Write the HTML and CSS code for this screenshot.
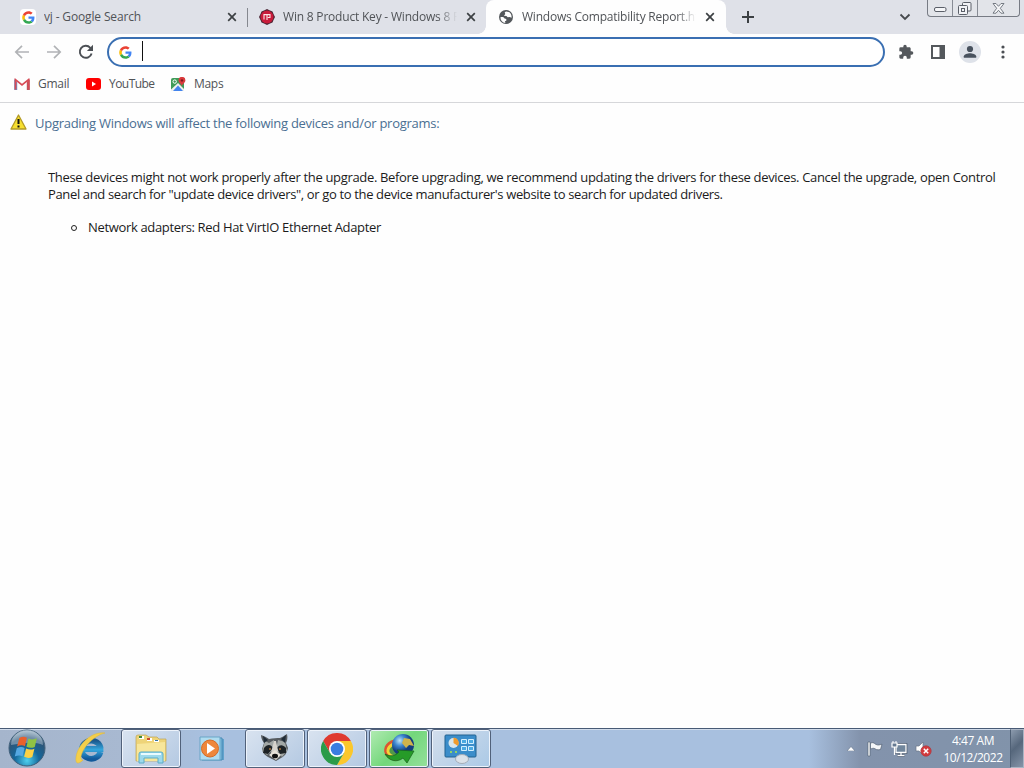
FILE: index.html
```html
<!DOCTYPE html>
<html lang="en">
<head>
<meta charset="utf-8">
<title>Windows Compatibility Report</title>
<link rel="stylesheet" href="styles.css">
</head>
<body>
<svg class="defs" width="0" height="0">
  <symbol id="google" viewBox="0 0 48 48">
    <path fill="#4285f4" d="M46 24.5c0-1.6-.1-3.100-.4-4.500H24v9h12.400c-.6 3-2.200 5.300-4.600 7l7.300 5.800C43.400 37.800 46 31.800 46 24.500z"/>
    <path fill="#34a853" d="M24 47c6.200 0 11.300-2 15.100-5.500L31.800 36c-2 1.400-4.700 2.200-7.800 2.200-6 0-11-4-12.800-9.400l-7.600 5.900C7.300 42 15 47 24 47z"/>
    <path fill="#fbbc05" d="M11.200 28.800a14 14 0 0 1 0-9.600l-7.600-5.900a23 23 0 0 0 0 21.400z"/>
    <path fill="#ea4335" d="M24 9.800c3.400 0 6.400 1.200 8.800 3.500l6.500-6.500C35.300 3.100 30.200 1 24 1 15 1 7.300 6 3.600 13.300l7.600 5.900C13 13.800 18 9.800 24 9.800z"/>
  </symbol>
  <symbol id="close" viewBox="0 0 10 10"><path d="M1.200 1.200l7.600 7.600M8.800 1.200L1.200 8.800" stroke="#3c4043" stroke-width="1.700"/></symbol>
</svg>

<header class="tabs">
  <div class="tab first">
    <span class="fav white"><svg width="13" height="13"><use href="#google"/></svg></span>
    <span class="title">vj - Google Search</span>
    <svg class="x" width="10" height="10"><use href="#close"/></svg>
  </div>
  <div class="tab second">
    <svg class="fav" viewBox="0 0 16 16"><path d="M8 0l3 1.500 2.500 1L14.500 5 16 8l-1.500 3-1 2.500-2.500 1L8 16l-3-1.500-2.500-1L1.500 11 0 8l1.500-3 1-2.500L5 1.500z" fill="#4b2534"/><circle cx="8" cy="8" r="6.500" fill="#c91c3b"/><path d="M5 10.500V5.600h6v2.900H8.800M8 5.600v5.400" fill="none" stroke="#fbe5e8" stroke-width="1.100"/></svg>
    <span class="title t2">Win 8 Product Key - Windows 8 Pro</span>
    <svg class="x" width="10" height="10"><use href="#close"/></svg>
  </div>
  <div class="tab active">
    <svg class="fav" viewBox="0 0 16 16"><circle cx="8" cy="8" r="7" fill="#54585c"/><path d="M2.500 8.200c1.800-.4 3.400 0 4 1.300l1.800.5v1.700l-1.400.6.500 1.600C4.400 13.700 2.200 11.500 2.500 8.200zM8.200 2.600c-1 .2-1.700.8-1.300 1.500l.4 1L5.900 6.700l2.500.3 1.300 1.300 2.100-.3 1.700.7c.6-3-1.500-6-4.300-6z" fill="#fff"/></svg>
    <span class="title t3">Windows Compatibility Report.html</span>
    <svg class="x" width="10" height="10"><use href="#close"/></svg>
  </div>
  <svg class="plus" width="12" height="12" viewBox="0 0 12 12"><path d="M6 0v12M0 6h12" stroke="#3c4043" stroke-width="2"/></svg>
  <svg class="chev" width="12" height="8" viewBox="0 0 12 8"><path d="M1.500 1.500L6 6l4.500-4.500" fill="none" stroke="#46494d" stroke-width="1.800"/></svg>
  <div class="winctl">
    <span class="wmin"><svg width="13" height="6" viewBox="0 0 13 6"><rect x=".5" y=".5" width="11.500" height="4" rx="1.500" fill="#f5f6f8" stroke="#5a5f68"/></svg></span>
    <span class="wmax"><svg width="14" height="13" viewBox="0 0 14 13"><g fill="#f1f2f5" stroke="#5a5f68"><rect x="4.500" y=".5" width="8.500" height="8.500" rx="1"/><rect x=".5" y="3.500" width="9" height="9" rx="1"/><rect x="3.500" y="6.500" width="3" height="3"/></g></svg></span>
    <span class="wcls"><svg width="13" height="11" viewBox="0 0 13 11"><path d="M1 .5h3l2.500 2.800L9 .5h3L8.300 5.300l3.700 4.900H9L6.500 7.300 4 10.200H1l3.700-4.900z" fill="#f5f6f8" stroke="#6a6f78" stroke-width=".9"/></svg></span>
  </div>
</header>

<nav class="toolbar">
  <svg class="arrow" width="16" height="14" viewBox="0 0 16 14"><path d="M15 7H2M8 .8L1.800 7 8 13.200" fill="none" stroke="#b1b3b6" stroke-width="1.700"/></svg>
  <svg class="arrow" width="16" height="14" viewBox="0 0 16 14"><path d="M1 7h13M8 .8L14.200 7 8 13.200" fill="none" stroke="#b1b3b6" stroke-width="1.700"/></svg>
  <svg class="reload" width="16" height="16" viewBox="0 0 16 16"><path d="M13.600 9.400A6 6 0 1 1 12.300 3.800L14 5.500" fill="none" stroke="#4b4f54" stroke-width="1.900"/><path d="M15 .8v6.100H8.900z" fill="#4b4f54"/></svg>
  <div class="omnibox"><svg width="13" height="13"><use href="#google"/></svg><i class="caret"></i></div>
  <svg class="puzzle" width="16" height="16" viewBox="0 0 24 24"><path fill="#54585c" d="M20.500 11H19V7c0-1.100-.9-2-2-2h-4V3.500a2.500 2.500 0 0 0-5 0V5H4a2 2 0 0 0-2 2v3.800h1.500a2.700 2.700 0 0 1 0 5.400H2V20c0 1.100.9 2 2 2h3.800v-1.500a2.700 2.700 0 0 1 5.400 0V22H17a2 2 0 0 0 2-2v-4h1.500a2.500 2.500 0 0 0 0-5z"/></svg>
  <svg class="panel" width="14" height="14" viewBox="0 0 14 14"><path fill="#54585c" fill-rule="evenodd" d="M0 0h14v14H0zM2 2v10h6.500V2z"/></svg>
  <svg class="avatar" width="22" height="22" viewBox="0 0 22 22"><circle cx="11" cy="11" r="11" fill="#dee2e9"/><circle cx="11" cy="8" r="3.100" fill="#48525e"/><path d="M4.800 16.800v-1.500c0-2 4-3.100 6.200-3.100s6.200 1.100 6.200 3.100v1.500z" fill="#48525e"/></svg>
  <svg class="dots" width="4" height="14" viewBox="0 0 4 14"><g fill="#4b4f54"><circle cx="2" cy="2" r="1.600"/><circle cx="2" cy="7" r="1.600"/><circle cx="2" cy="12" r="1.600"/></g></svg>
</nav>

<nav class="bookmarks">
  <a class="bm gmail"><svg width="16" height="12" viewBox="0 0 16 12"><path d="M.2 1v11h3V4z" fill="#7688bd"/><path d="M15.800 1v11h-3V4z" fill="#b7565f"/><path d="M1.500 11.500V1.700L8 7l6.500-5.300v9.800" fill="none" stroke="#d84a55" stroke-width="1.700"/></svg><span>Gmail</span></a>
  <a class="bm yt"><svg width="15" height="12" viewBox="0 0 15 12"><rect width="15" height="12" rx="3" fill="#f00"/><path d="M6 3.500v5L10 6z" fill="#fff"/></svg><span>YouTube</span></a>
  <a class="bm maps"><svg width="15" height="15" viewBox="0 0 15 15"><rect y="1" width="13" height="13" rx="2" fill="#3e9b57"/><path d="M0 12.500L7 6l6 6v2H0z" fill="#eef0ee"/><path d="M2 14L7 8.500 12 14z" fill="#4384ed"/><circle cx="3.700" cy="4.600" r="1.700" fill="none" stroke="#fff"/><path d="M10.800 9.500C10.600 7 7.500 6 7.500 3.300a3.400 3.400 0 0 1 6.900 0C14.400 6 11.100 7 10.800 9.500z" fill="#d93a3c"/><circle cx="11" cy="3.400" r="1.200" fill="#7c1b20"/></svg><span>Maps</span></a>
</nav>

<main class="report">
  <h1 class="heading">
    <svg width="17" height="16" viewBox="0 0 17 16"><path d="M8.500 1L16 15H1z" fill="#f7df2e" stroke="#b39a26" stroke-width="1.300" stroke-linejoin="round"/><path d="M8.500 5v5M8.500 11.500v2" stroke="#111" stroke-width="2"/></svg>
    <span>Upgrading Windows will affect the following devices and/or programs:</span>
  </h1>
  <p class="body"><span class="l1">These devices might not work properly after the upgrade. Before upgrading, we recommend updating the drivers for these devices. Cancel the upgrade, open Control</span><br><span class="l2">Panel and search for "update device drivers", or go to the device manufacturer's website to search for updated drivers.</span></p>
  <ul class="list"><li><i class="bullet"></i><span class="l3">Network adapters: Red Hat VirtIO Ethernet Adapter</span></li></ul>
</main>

<footer class="taskbar">
  <svg class="start" width="38" height="38" viewBox="0 0 38 38">
    <defs><radialGradient id="orb" cx=".5" cy=".85" r=".85"><stop offset="0" stop-color="#4fd0ee"/><stop offset=".4" stop-color="#14679b"/><stop offset=".75" stop-color="#2e5577"/><stop offset="1" stop-color="#a9bdcb"/></radialGradient></defs>
    <circle cx="19" cy="19" r="18" fill="url(#orb)" stroke="#405f79"/><path d="M3 16a16 15 0 0 1 32 0c-8-4-22-2-32 0z" fill="#d7e4ee" opacity=".4"/>
    <g transform="translate(-3.300 -3.300) scale(1.170)"><path d="M12.500 10.500c2.500-1.500 4.500-1.300 6.500-.2l-1.700 7.200c-2-1-4.200-1-6.700.3z" fill="#e8602c"/><path d="M20.300 11c2.500 1.200 4.800 1 7.200-.2l-1.800 7.300c-2.400 1-4.700 1-7.100-.2z" fill="#8fc244"/><path d="M10.300 19.200c2.500-1.300 4.700-1.300 6.700-.2l-1.700 7.200c-2-1-4.200-1-6.700.2z" fill="#55a8e2"/><path d="M18.300 19.500c2.400 1.200 4.700 1.100 7.100.1l-1.800 7.200c-2.400 1.200-4.700 1-7-.2z" fill="#fbd144"/></g>
  </svg>
  <svg class="ie" width="32" height="32" viewBox="0 0 32 32">
    <defs><linearGradient id="ieg" x2="0" y2="1"><stop stop-color="#1b588d"/><stop offset=".5" stop-color="#35a7dd"/><stop offset="1" stop-color="#12599b"/></linearGradient></defs>
    <path d="M26.500 20A9.500 9 0 1 1 26.500 15.500v1.500H11" fill="none" stroke="url(#ieg)" stroke-width="5.800"/><path d="M31 1C18-1 4 12 2 25c-1 8 3 7 7 3-4 1-2-8 4-15S26 2 31 1z" fill="#f4cf4b" stroke="#dfb63a" stroke-width=".5"/>
  </svg>
  <div class="task explorer"><svg width="34" height="32" viewBox="0 0 34 32"><path d="M2 28V4q0-2 2-2h8l3 2h8l2 2h7v22z" fill="#eed478" stroke="#bba35a" stroke-width=".7"/><path d="M5 3h5v3H5zM13 5h5v3h-5zM20 7h5v2h-5z" fill="#fff"/><path d="M5 3h3v2H5z" fill="#39863a"/><path d="M13 5h3v2h-3z" fill="#ca452e"/><path d="M21 7h3v1h-3z" fill="#3774a4"/><path d="M3 11l28-2v19H3z" fill="#f7e69b"/><path d="M5 30v-9q0-2 2-2h20q2 0 2 2v9h-5v-5H10v5z" fill="#9dd9ec" stroke="#5aadc8"/><path d="M7 21h20" stroke="#e9fbff" stroke-width="2"/></svg></div>
  <div class="task plain"><svg width="30" height="26" viewBox="0 0 30 26"><path d="M7 3h19v21H7z" fill="#62a3cc"/><path d="M4 2h20v22H4z" fill="#84c3e4" stroke="#4587b3"/><path d="M2 1h20v23H2z" fill="#afdcf0" stroke="#6ba5c6"/><circle cx="12" cy="12.500" r="8.500" fill="#ee873b" stroke="#d56b26"/><path d="M9 7v11l8-5.500z" fill="#fff"/></svg></div>
  <div class="task"><svg width="30" height="30" viewBox="0 0 30 30"><path d="M1 1c4 1 6 3 8 4 4-1 8-1 11-1 2-1 4-2 7-4 1 4 0 7-1 9l2 5c-1 5-3 8-7 10l-5 3-6-3c-4-2-7-4-8-9l2-6C2 6 1 4 1 1z" fill="#575c60"/><path d="M5 7l4 2 5-3 1 8-8 7-5-4zM18 6l7 2 2 9-5 6-6-8z" fill="#a3a8a6"/><path d="M3 2l5 4-4 3zM26 1l-1 8-4-4z" fill="#202c38"/><path d="M4 14c3-4 7-4 9 0l-5 6-5-1zM17 14c3-4 6-3 9 0v5l-6 1z" fill="#1d2225"/><path d="M14 7h2l2 10-2 4-5-2z" fill="#d6d3cc"/><path d="M9 21l6-5 6 5-5 5z" fill="#e7e2d9"/><ellipse cx="15" cy="22" rx="3" ry="2.300" fill="#111"/><circle cx="10" cy="15" r="1" fill="#a8743c"/><circle cx="20" cy="15" r="1" fill="#a8743c"/></svg></div>
  <div class="task"><svg width="32" height="32" viewBox="0 0 32 32"><path d="M16 8h13.860A16 16 0 0 0 2.140 8l6.930 12z" fill="#df3a30"/><path d="M22.930 20L16 32A16 16 0 0 0 29.860 8H16z" fill="#fbc72c"/><path d="M9.070 20L2.140 8A16 16 0 0 0 16 32l6.930-12z" fill="#2b9b49"/><circle cx="16" cy="16" r="8" fill="#fff"/><circle cx="16" cy="16" r="6.300" fill="#3a7de0"/></svg></div>
  <div class="task green"><svg width="34" height="32" viewBox="0 0 34 32"><defs><radialGradient id="globe" cx=".35" cy=".3"><stop stop-color="#bfe6fa"/><stop offset=".5" stop-color="#3c85cf"/><stop offset="1" stop-color="#143e7d"/></radialGradient></defs><path d="M16 6C5 6 0 15 3 21s10 8 16 5l-3-5c-6 2-9-1-7-6z" fill="#dc5530"/><path d="M15 9C7 9 3 16 5 20s8 6 13 3z" fill="#f2d537"/><path d="M13 12c-6 2-7 7-4 9s6 2 10 0z" fill="#519948"/><circle cx="21" cy="12" r="11" fill="url(#globe)"/><path d="M22 5l6 1 4 7-5-1-3 3-4-5z" fill="#d0b34c"/><path d="M3 21c6 3 10 2 14-2l-2-2 17 1-7 12-4-5C15 30 7 28 3 21z" fill="#269b28" stroke="#17601c" stroke-width=".7"/></svg></div>
  <div class="task cpl"><svg width="34" height="30" viewBox="0 0 34 30"><rect x="1" y="1" width="31" height="22" rx="1" fill="#3b8dca" stroke="#236391"/><circle cx="9.500" cy="9" r="5" fill="#d7e6ed"/><path d="M9.500 9V3.500A5.500 5.500 0 0 1 14 12z" fill="#ef9b2d"/><path d="M17.500 5.500h5v4h-5zM24.500 5.500h5v4h-5zM17.500 12.500h5v4h-5zM24.500 12.500h5v4h-5z" fill="#4caae1" stroke="#d2efff"/><path d="M6 18h2M11 18h2" stroke="#8fd468" stroke-width="2"/><ellipse cx="18" cy="25" rx="6.500" ry="4.500" fill="#dce2e9" stroke="#a3acb8"/></svg></div>
  <div class="tray">
    <svg class="up" width="8" height="5" viewBox="0 0 8 5"><path d="M0 5L4 .5 8 5z" fill="#fff" stroke="#55657a" stroke-width=".5"/></svg>
    <svg class="flag" width="16" height="16" viewBox="0 0 16 16"><path d="M1 1h2v14H1z" fill="#fff" stroke="#4b5a6d" stroke-width=".6"/><path d="M3.500 2c3-1 4 .5 5 1.200C11 4.500 12 4 15 3.200L13.500 8.500C10 9.500 8.500 8 7.500 7.500 6 7 5 7.500 3.500 8z" fill="#f4f6f8" stroke="#536174" stroke-width=".7"/></svg>
    <svg class="net" width="17" height="16" viewBox="0 0 17 16"><path d="M5 3.500h10v8H5zM10 12v2M6.500 14.500h7" fill="#62778f" stroke="#344357" stroke-width="2.500"/><path d="M5 3.500h10v8H5zM10 12v2M6.500 14.500h7" fill="#71869c" stroke="#fff" stroke-width="1.300"/><path d="M1 2h5v4H1zM3.500 6v8" fill="#647991" stroke="#fff" stroke-width="1.200"/><path d="M2 0v2M5 0v2" stroke="#fff"/></svg>
    <svg class="vol" width="17" height="16" viewBox="0 0 17 16"><path d="M1 5h3l4-4v13l-4-4H1z" fill="#fff" stroke="#6b7787" stroke-width=".7"/><circle cx="11" cy="10" r="5.200" fill="#d33a3d" stroke="#a93b43" stroke-width=".7"/><path d="M8.800 7.800l4.400 4.400M13.200 7.800l-4.400 4.400" stroke="#fff" stroke-width="1.500"/></svg>
    <div class="clock"><span class="time">4:47 AM</span><span class="date">10/12/2022</span></div>
    <div class="peek"></div>
  </div>
</footer>
</body>
</html>
```
FILE: styles.css
```css
* { box-sizing: border-box; }
body {
  margin: 0; width: 1024px; height: 768px; overflow: hidden;
  display: flex; flex-direction: column; background: #fefefe;
  font: 12px/16px "Open Sans", "Noto Sans", sans-serif; color: #505357;
}
svg { display: block; flex: none; }
.defs { position: absolute; }
i { display: block; flex: none; }

.tabs { flex: none; height: 34px; display: flex; align-items: flex-start; background: #dfe1e8; }
.tab { height: 34px; display: flex; align-items: center; flex: none; position: relative; }
.first { width: 248px; padding-left: 20px; }
.first::after { content: ""; position: absolute; right: 0; top: 8px; height: 19px; width: 1px; background: #85888f; }
.second { width: 238px; padding-left: 11px; }
.active { width: 240px; padding-left: 12px; background: #fefefe; border-radius: 8px 8px 0 0; }
.active::before, .active::after { content: ""; position: absolute; bottom: 0; width: 8px; height: 8px; }
.active::before { left: -8px; background: radial-gradient(circle at 0 0, transparent 7.500px, #fefefe 8px); }
.active::after { right: -8px; background: radial-gradient(circle at 100% 0, transparent 7.500px, #fefefe 8px); }
.fav { width: 16px; height: 16px; margin-right: 8px; flex: none; }
.white { background: #fff; border-radius: 4px; display: flex; align-items: center; justify-content: center; }
.title { width: 174px; white-space: nowrap; overflow: hidden; letter-spacing: -.15px; }
.t2 { letter-spacing: -.2px; }
.t3 { letter-spacing: -.22px; }
.t2, .t3 { -webkit-mask-image: linear-gradient(90deg, #000 89%, transparent); mask-image: linear-gradient(90deg, #000 89%, transparent); }
.x { margin-left: 9px; }
.plus { margin: 11px 0 0 16px; }
.chev { margin: 13px 0 0 145px; }
.winctl { display: flex; margin-left: 16px; width: 93px; height: 17px; border: 1px solid #777b84; border-top: 0; border-radius: 0 0 4px 4px; background: #e2e4e9; }
.winctl span { display: flex; justify-content: center; align-items: center; }
.wmin { width: 25px; border-right: 1px solid #888c95; padding-top: 4px; }
.wmax { width: 25px; border-right: 1px solid #888c95; }
.wcls { flex: 1; }

.toolbar { flex: none; height: 36px; display: flex; align-items: center; padding-left: 14px; background: #fefefe; }
.arrow { margin-right: 16px; }
.omnibox { width: 778px; height: 30px; margin-left: 13px; border: 2px solid #3a6fb2; border-radius: 15px; display: flex; align-items: center; padding-left: 10px; background: #fff; }
.caret { width: 1px; height: 20px; background: #111; margin-left: 10px; margin-bottom: 2px; }
.puzzle { margin-left: 13px; }
.panel { margin-left: 17px; }
.avatar { margin-left: 14px; }
.dots { margin-left: 20px; }

.bookmarks { flex: none; height: 33px; display: flex; padding: 6px 0 0 14px; border-bottom: 1px solid #d6d7da; }
.bm { display: flex; align-items: center; height: 16px; }
.bm span { margin-left: 8px; letter-spacing: -.25px; }
.gmail { width: 72px; }
.yt { width: 85px; }
.yt span { letter-spacing: -.55px; }
.maps span { letter-spacing: -.3px; }

.report { flex: 1; color: #1b1b1b; font-size: 13px; line-height: 17px; }
.heading { display: flex; margin: 10px 0 0 10px; font-size: 13px; line-height: 20px; font-weight: 400; color: #4a6f92; }
.heading svg { margin-top: 1px; }
.heading span { margin-left: 8px; letter-spacing: -.27px; white-space: nowrap; }
.body { margin: 36px 0 0 48px; white-space: nowrap; }
.l1 { letter-spacing: -.331px; }
.l2 { letter-spacing: -.357px; }
.l3 { letter-spacing: -.34px; }
.list { list-style: none; margin: 16px 0 0 71px; padding: 0; }
.list li { display: flex; align-items: center; }
.bullet { width: 6px; height: 6px; border: 1px solid #222; border-radius: 50%; margin-right: 11px; }

.taskbar { flex: none; height: 40px; display: flex; border-top: 1px solid #485a75; background: linear-gradient(90deg, #a5b5cc, #a8b9d1 12%, #a8c0df 20%, #a8c0df 79%, #8393ac 84%, #8193aa); box-shadow: inset 0 1px #d2ddec; }
.start { margin-left: 8px; }
.ie { margin: 3px 0 0 28px; }
.task { width: 60px; height: 39px; margin-right: 2px; border: 1px solid #51617a; border-radius: 3px; box-shadow: inset 0 0 0 1px #edf3fb; background: linear-gradient(135deg, #d9e3f0, #b4c9e2); display: flex; align-items: center; justify-content: center; }
.explorer { margin-left: 15px; }
.plain { background: none; border-color: transparent; box-shadow: none; }
.green { background: linear-gradient(135deg, #b2ebb3, #73d77b 50%, #95e09b); }
.cpl { background: linear-gradient(135deg, #d3deec, #abc9e6); }
.tray { margin-left: auto; display: flex; align-items: center; height: 39px; }
.up { margin-right: 12px; }
.flag { margin-right: 8px; }
.net { margin-right: 7px; }
.clock { width: 74px; margin-left: 4px; display: flex; flex-direction: column; align-items: center; color: #fff; line-height: 17px; letter-spacing: -.45px; padding-top: 1px; }
.peek { width: 14px; height: 39px; border: 1px solid #aab5c4; border-left-color: #4f6075; background: linear-gradient(135deg, #8c9bae, #56677c 45%, #8594a8); }
```
